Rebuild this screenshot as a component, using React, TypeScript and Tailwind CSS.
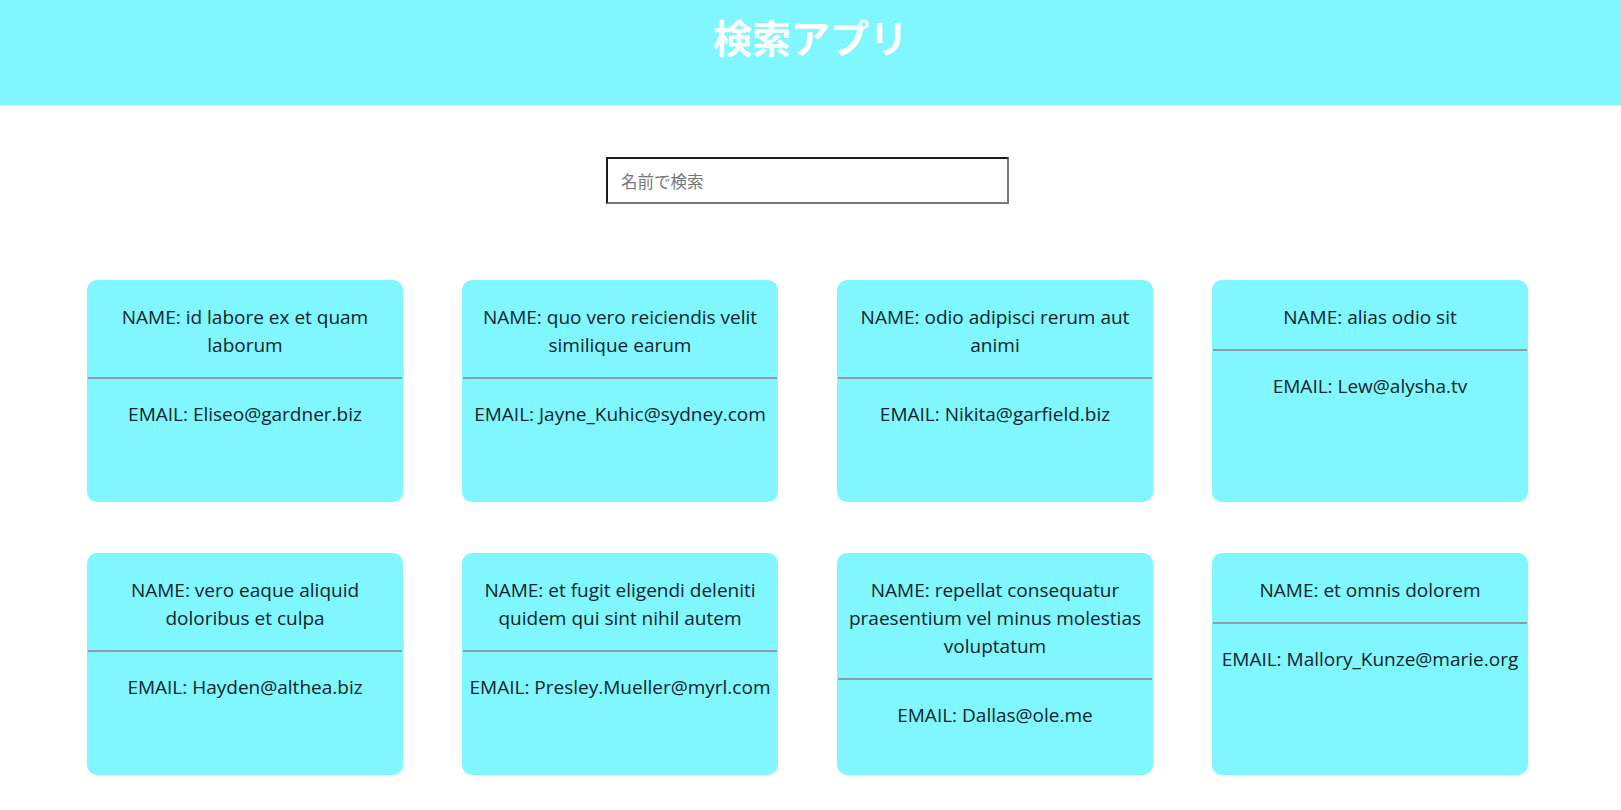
const users = [
  { name: 'id labore ex et quam laborum', email: 'Eliseo@gardner.biz' },
  { name: 'quo vero reiciendis velit similique earum', email: 'Jayne_Kuhic@sydney.com' },
  { name: 'odio adipisci rerum aut animi', email: 'Nikita@garfield.biz' },
  { name: 'alias odio sit', email: 'Lew@alysha.tv' },
  { name: 'vero eaque aliquid doloribus et culpa', email: 'Hayden@althea.biz' },
  { name: 'et fugit eligendi deleniti quidem qui sint nihil autem', email: 'Presley.Mueller@myrl.com' },
  { name: 'repellat consequatur praesentium vel minus molestias voluptatum', email: 'Dallas@ole.me' },
  { name: 'et omnis dolorem', email: 'Mallory_Kunze@marie.org' },
]

function Card({ name, email }: { name: string; email: string }) {
  return (
    <div className="h-[222px] bg-[#80f6ff] rounded-[10px] text-center text-[19px] leading-[28px] text-[#0f2529] font-['Open_Sans',sans-serif]">
      <p className="pt-[23px] pb-[18px] px-[5px]">NAME: {name}</p>
      <div className="h-[2px] bg-[#8f9ea6] mx-[1px]" />
      <p className="pt-[21px] px-[5px]">EMAIL: {email}</p>
    </div>
  )
}

function App() {
  return (
    <div className="min-h-screen bg-white">
      <header className="h-[105px] bg-[#80f6ff] flex justify-center">
        <h1 className="pt-[12px] text-[39px] leading-[48px] font-bold text-white font-['Noto_Sans_CJK_JP',sans-serif]">
          検索アプリ
        </h1>
      </header>
      <main>
        <div className="flex justify-center pt-[52px]">
          <input
            type="text"
            placeholder="名前で検索"
            className="w-[403px] h-[47px] ml-[-6px] border-2 border-t-[#1b1b1b] border-l-[#1b1b1b] border-r-[#777] border-b-[#777] px-[13px] text-[16.5px] placeholder:text-[#767676] font-['Noto_Sans_CJK_JP',sans-serif] outline-none"
          />
        </div>
        <section className="grid grid-cols-[repeat(4,316px)] gap-x-[59px] gap-y-[51px] pt-[76px] pl-[87px] pb-8">
          {users.map((u) => (
            <Card key={u.email} name={u.name} email={u.email} />
          ))}
        </section>
      </main>
    </div>
  )
}
export default App;
